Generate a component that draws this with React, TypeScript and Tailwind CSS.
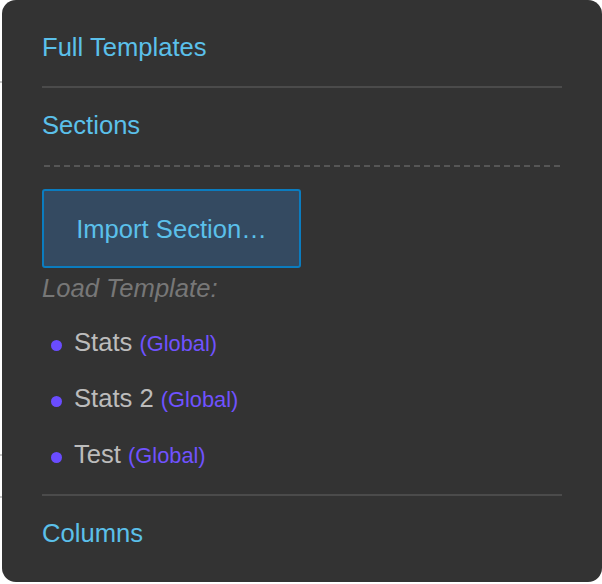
import React from "react";

const items = ["Stats", "Stats 2", "Test"];

export default function App() {
  return (
    <div
      className="relative w-[602px] h-[584px] bg-white"
      style={{ fontFamily: '"Liberation Sans", Arial, sans-serif' }}
    >
      <div className="absolute left-0 top-[81px] w-[2px] h-[2px] bg-[#c8c8c8]" />
      <div className="absolute left-0 top-[454px] w-[2px] h-[2px] bg-[#c8c8c8]" />
      <div className="absolute left-0 top-[496px] w-[2px] h-[2px] bg-[#c8c8c8]" />
      <div className="ml-[2px] w-[600px] h-[582px] rounded-[14px] bg-[#333333] px-[40px] flex flex-col">
        <div className="h-[86px] pt-[7px] flex items-center text-[25.6px] leading-[30px] text-[#5bc0ea]">
          Full Templates
        </div>
        <div className="h-[2px] bg-[#4b4b4b]" />
        <div className="h-[77px] pb-[4px] flex items-center text-[25.6px] leading-[30px] text-[#5bc0ea]">
          Sections
        </div>
        <div className="h-[2px] bg-[repeating-linear-gradient(to_right,transparent_0_2px,#565656_2px_8px,transparent_8px_10px)]" />
        <button className="mt-[22px] w-[259px] h-[79px] rounded-[3px] border-2 border-[#0b7cbf] bg-[#344a61] text-[25.6px] leading-[30px] text-[#5bc0ea] flex items-center justify-center">
          Import Section…
        </button>
        <div className="mt-[5px] h-[30px] leading-[30px] text-[25.6px] italic text-[#777777]">
          Load Template:
        </div>
        <div className="mt-[12px] flex flex-col">
          {items.map((name) => (
            <div key={name} className="h-[56px] flex items-center">
              <span className="ml-[9px] mt-[5px] w-[11px] h-[11px] rounded-full bg-[#6a4cff]" />
              <span className="ml-[12px] text-[25.6px] leading-[30px] text-[#bcbcbc]">
                {name}{" "}
                <span className="text-[21.8px] text-[#7052ff]">(Global)</span>
              </span>
            </div>
          ))}
        </div>
        <div className="mt-[11px] h-[2px] bg-[#4b4b4b]" />
        <div className="h-[73px] flex items-center text-[25.6px] leading-[30px] text-[#5bc0ea]">
          Columns
        </div>
      </div>
    </div>
  );
}
